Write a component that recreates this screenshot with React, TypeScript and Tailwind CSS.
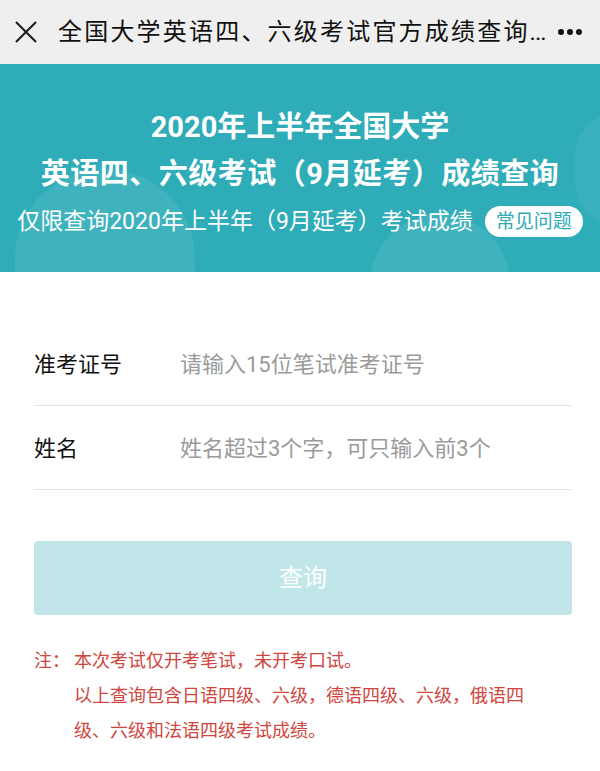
import React from 'react';

const font = { fontFamily: '"Roboto", "Noto Sans CJK SC", sans-serif' };

function TopBar() {
  return (
    <div className="flex items-center h-[64px] bg-[#efefef] pl-[14px] pr-[18px]">
      <svg width="24" height="24" viewBox="0 0 24 24" className="shrink-0">
        <path d="M2 2 L22 22 M22 2 L2 22" stroke="#1a1a1a" strokeWidth="2" fill="none" />
      </svg>
      <p className="ml-[20px] whitespace-nowrap text-[24px] text-[#111] leading-none">
        <span className="tracking-[2.2px]">全国大学英语四、六级考试官方成绩查询</span>
        <span className="tracking-[-1px]">...</span>
      </p>
      <div className="flex gap-[3px] ml-auto">
        <span className="w-[6px] h-[6px] rounded-full bg-[#111]" />
        <span className="w-[6px] h-[6px] rounded-full bg-[#111]" />
        <span className="w-[6px] h-[6px] rounded-full bg-[#111]" />
      </div>
    </div>
  );
}

function Banner() {
  return (
    <div className="relative overflow-hidden bg-[#2eacb8] h-[208px] text-white">
      <div className="absolute left-[15px] top-[105px] w-[180px] h-[210px] rounded-full bg-white/[0.08]" />
      <div className="absolute left-[370px] top-[150px] w-[140px] h-[150px] rounded-full bg-white/[0.08]" />
      <div className="absolute left-[575px] top-[50px] w-[80px] h-[110px] rounded-full bg-white/[0.06]" />
      <div className="relative flex flex-col items-center pt-[40px]">
        <h1 className="text-[29px] font-bold leading-[46px]">2020年上半年全国大学</h1>
        <h2 className="text-[29px] font-bold leading-[46px] tracking-[0.5px] mt-[1px]">英语四、六级考试（9月延考）成绩查询</h2>
        <div className="flex items-center mt-[9px]">
          <span className="text-[23px] leading-[30px]">仅限查询2020年上半年（9月延考）考试成绩</span>
          <span className="ml-[12px] bg-white text-[#2eacb8] text-[19px] leading-[31px] px-[11px] rounded-full">常见问题</span>
        </div>
      </div>
    </div>
  );
}

function Field({ label, placeholder }: { label: string; placeholder: string }) {
  return (
    <div className="flex items-center h-[84px] border-b border-[#e4e4e4] pt-[2px]">
      <span className="w-[146px] text-[22px] text-[#111]">{label}</span>
      <span className="text-[22px] text-[#9a9a9a]">{placeholder}</span>
    </div>
  );
}

export default function App() {
  return (
    <div className="w-[600px] min-h-[771px] bg-white" style={font}>
      <TopBar />
      <Banner />
      <div className="pl-[34px] pr-[28px] pt-[50px]">
        <Field label="准考证号" placeholder="请输入15位笔试准考证号" />
        <Field label="姓名" placeholder="姓名超过3个字，可只输入前3个" />
        <button className="mt-[51px] w-full h-[74px] rounded-[4px] bg-[#c0e6e9] text-white text-[24px]">
          查询
        </button>
        <div className="mt-[28px] flex text-[18px] leading-[35px] text-[#d0453d]">
          <span className="w-[40px] shrink-0">注：</span>
          <div className="pr-[20px]">
            <p>本次考试仅开考笔试，未开考口试。</p>
            <p>以上查询包含日语四级、六级，德语四级、六级，俄语四级、六级和法语四级考试成绩。</p>
          </div>
        </div>
      </div>
    </div>
  );
}
